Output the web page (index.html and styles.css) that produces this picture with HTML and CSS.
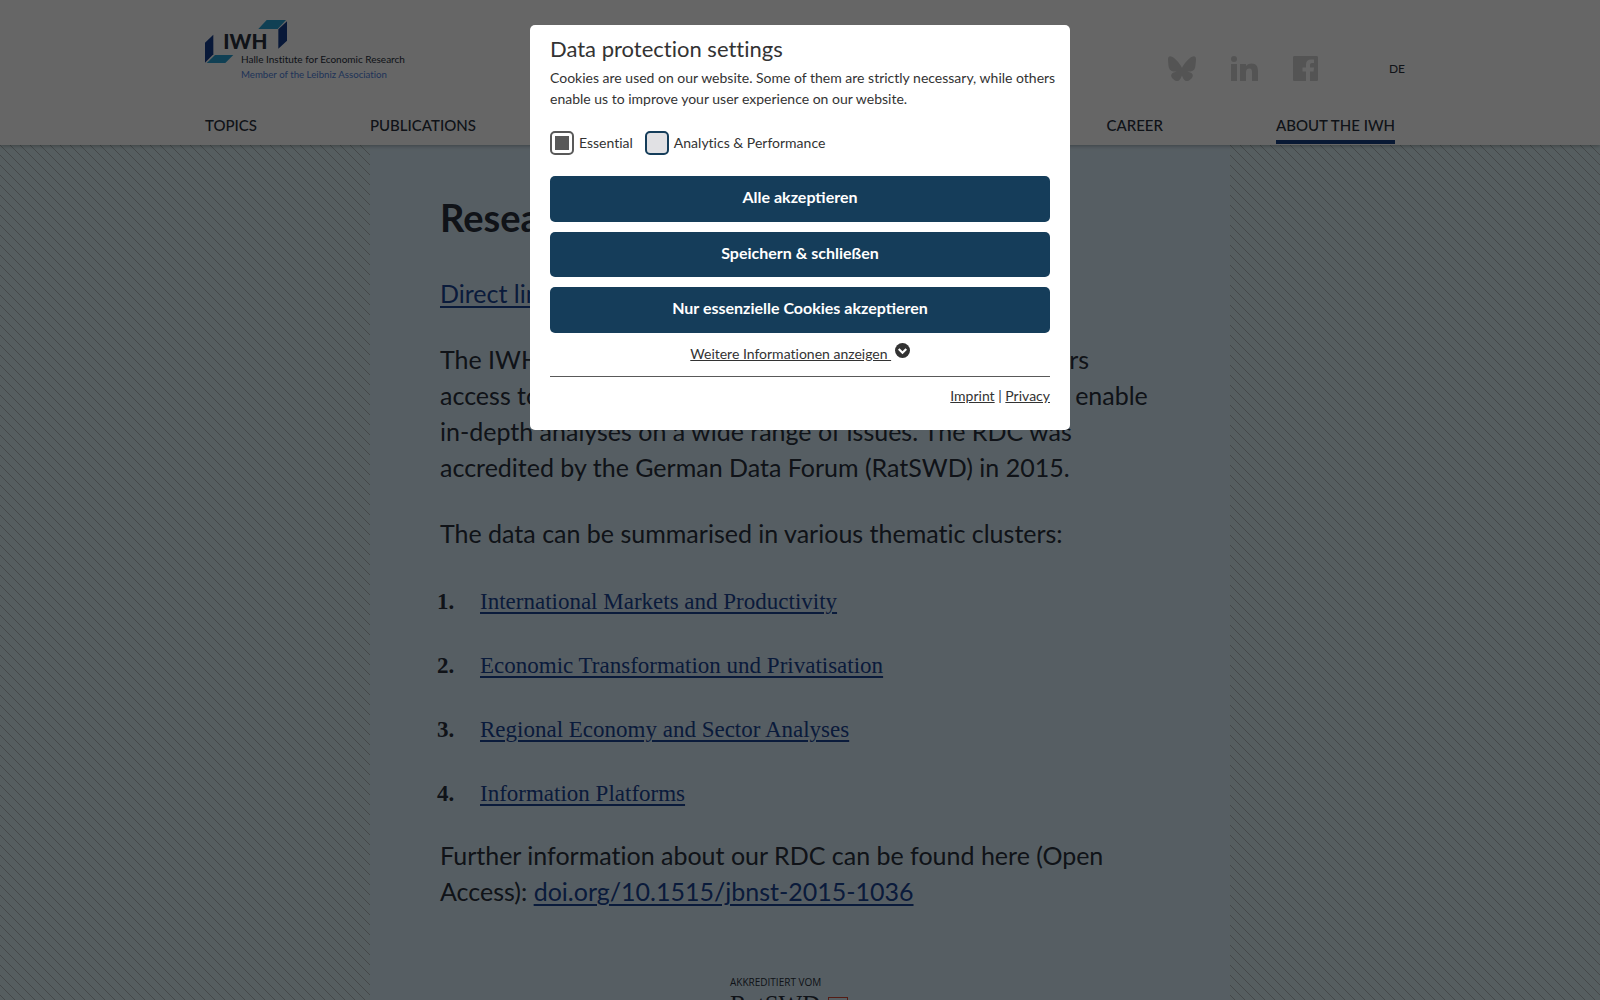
FILE: index.html
```html
<!DOCTYPE html>
<html lang="en">
<head>
    <meta charset="UTF-8">
    <meta name="viewport" content="width=device-width, initial-scale=1.0">
    <title>Research Data Centre - IWH</title>
    <link rel="stylesheet" href="styles.css">
</head>
<body>

<header class="header">
    <div class="header-top">
        <a class="logo" href="#" aria-label="IWH">
            <svg width="200" height="60" viewBox="0 0 600 180">
                <polygon class="logo-dark" points="0,68 25,44 25,103 0,128"/>
                <polygon class="logo-light" points="5,129 30,105 85,105 61,129"/>
                <polygon class="logo-light" points="160,27 185,0 243,0 218,27"/>
                <polygon class="logo-dark" points="220,28 246,4 246,62 220,86"/>
                <text class="logo-name" x="55" y="87">IWH</text>
                <text class="logo-line" x="108" y="130">Halle Institute for Economic Research</text>
                <text class="logo-member" x="108" y="174">Member of the Leibniz Association</text>
            </svg>
        </a>
        <div class="social">
            <a href="#" aria-label="Bluesky">
                <svg width="28" height="25" viewBox="0 0 28 25"><path d="M6 2c3.300 2.400 6.800 7.200 8 9.900 1.200-2.700 4.700-7.500 8-9.900 2.400-1.800 6-3.100 6 1.200 0 .9-.5 7.200-.8 8.200-1 3.600-4.700 4.500-8 4 5.700 1 7.200 4.200 4 7.400-6 6.100-8.600-1.500-9.200-3.400-.7 1.900-3.200 9.500-9.200 3.400-3.200-3.200-1.700-6.400 4-7.400-3.300.5-7-.4-8-4C.5 10.400 0 4.100 0 3.200 0-1.100 3.600.2 6 2z"/></svg>
            </a>
            <a href="#" aria-label="LinkedIn">
                <svg width="27" height="25" viewBox="0 0 27 25"><circle cx="3" cy="3" r="3"/><path d="M0 8h6v17H0zM9 8h6v2.300C16 8.500 18 7.500 20.500 7.500c5 0 6.500 3 6.500 8V25h-6v-8.500c0-2.500-.5-4-2.700-4-2.300 0-3.300 1.500-3.300 4V25H9z"/></svg>
            </a>
            <a href="#" aria-label="Facebook">
                <svg width="25" height="25" viewBox="0 0 25 25"><path d="M1.500 0h22C24.500 0 25 .5 25 1.500v22c0 1-.5 1.500-1.500 1.500H17v-9.500h3.500l.5-4h-4V9c0-1.200.5-2 2-2h2V3.700C20.500 3.500 19.500 3.500 18 3.500c-3 0-5 1.800-5 5v3H9.500v4H13V25H1.500C.5 25 0 24.500 0 23.500v-22C0 .5.500 0 1.500 0z"/></svg>
            </a>
            <a class="lang" href="#">DE</a>
        </div>
    </div>
    <nav class="nav">
        <div class="nav-group">
            <a href="#">TOPICS</a>
            <a href="#">PUBLICATIONS</a>
        </div>
        <div class="nav-group">
            <a href="#">CAREER</a>
            <a class="active" href="#">ABOUT THE IWH</a>
        </div>
    </nav>
</header>

<main class="page">
    <article class="content">
        <h1>Research Data Centre</h1>
        <p><a href="#">Direct link to the data</a></p>
        <p>The IWH Research Data Centre (RDC) offers all researchers access to extensive microdata and different data sets that enable in-depth analyses on a wide range of issues. The RDC was accredited by the German Data Forum (RatSWD) in 2015.</p>
        <p>The data can be summarised in various thematic clusters:</p>
        <ol>
            <li><a href="#">International Markets and Productivity</a></li>
            <li><a href="#">Economic Transformation und Privatisation</a></li>
            <li><a href="#">Regional Economy and Sector Analyses</a></li>
            <li><a href="#">Information Platforms</a></li>
        </ol>
        <p>Further information about our RDC can be found here (Open Access): <a href="#">doi.org/10.1515/jbnst-2015-1036</a></p>
        <div class="accredited">
            <div class="accredited-by">AKKREDITIERT VOM</div>
            <div class="accredited-name">RatSWD <span class="accredited-mark"></span></div>
        </div>
    </article>
</main>

<div class="overlay">
    <form class="modal" role="dialog" aria-labelledby="modal-title">
        <h2 id="modal-title">Data protection settings</h2>
        <p>Cookies are used on our website. Some of them are strictly necessary, while others enable us to improve your user experience on our website.</p>
        <div class="options">
            <input type="checkbox" id="essential" checked disabled>
            <label for="essential">Essential</label>
            <input type="checkbox" id="analytics">
            <label for="analytics">Analytics &amp; Performance</label>
        </div>
        <button type="button">Alle akzeptieren</button>
        <button type="button">Speichern &amp; schließen</button>
        <button type="button">Nur essenzielle Cookies akzeptieren</button>
        <div class="more">
            <a href="#">Weitere Informationen anzeigen&nbsp;</a>
            <svg width="15" height="15" viewBox="0 0 14 14"><circle cx="7" cy="7" r="7"/><path d="M3.500 5.500L7 9l3.500-3.500"/></svg>
        </div>
        <div class="legal"><a href="#">Imprint</a> | <a href="#">Privacy</a></div>
    </form>
</div>

</body>
</html>
```

FILE: styles.css
```css
* {
    box-sizing: border-box;
}
body {
    margin: 0;
    height: 100vh;
    overflow: hidden;
    font-family: Lato, sans-serif;
    font-variant-ligatures: none;
    color: #28303c;
    background-color: #d7ebf0;
    background-image: linear-gradient(45deg, transparent 46%, #acb4b6 46%, #acb4b6 54%, transparent 54%);
    background-size: 10px 10px;
    background-position: 5px 0;
}
a {
    color: #1a4494;
}

/* header */
.header {
    position: relative;
    height: 145px;
    padding: 20px 195px 0 205px;
    background-color: #fff;
    box-shadow: 0 1px 4px rgba(0, 0, 0, 0.3);
}
.header-top {
    display: flex;
    justify-content: space-between;
    height: 92px;
}
.logo-dark {
    fill: #143c8c;
}
.logo-light {
    fill: #28a0d2;
}
.logo-name {
    font-size: 62px;
    font-weight: 900;
    fill: #28303c;
}
.logo-line {
    font-size: 30px;
    fill: #28303c;
}
.logo-member {
    font-size: 29px;
    fill: #5082dc;
}
.social {
    display: flex;
    align-items: center;
    gap: 35px;
    height: 96px;
}
.social svg {
    display: block;
    fill: #d2d2d2;
}
.lang {
    margin-left: 36px;
    font-size: 12px;
    color: #28303c;
    text-decoration: none;
}
.nav,
.nav-group {
    display: flex;
    justify-content: space-between;
}
.nav {
    padding-right: 10px;
}
.nav-group {
    gap: 113px;
}
.nav a {
    height: 32px;
    font-size: 15px;
    font-weight: 500;
    line-height: 27px;
    color: #28303c;
    text-decoration: none;
}
.nav .active {
    border-bottom: 4px solid #153d80;
}

/* content */
.page {
    display: flex;
    justify-content: center;
}
.content {
    width: 860px;
    padding: 47px 70px;
    background-color: #d7ebf7;
    font-size: 25px;
    line-height: 36px;
}
.content h1 {
    margin: 0 0 33px;
    font-size: 38px;
    line-height: 50px;
}
.content p {
    margin: 0 0 30px;
}
.content a {
    text-decoration-thickness: 2px;
    text-underline-offset: 3px;
}
.content ol {
    margin: 33px 0 25px;
    padding-left: 20px;
    font-family: "Liberation Serif", serif;
    font-size: 23px;
}
.content li {
    padding-left: 20px;
}
.content li + li {
    margin-top: 28px;
}
.content li::marker {
    font-weight: bold;
}
.accredited {
    width: 140px;
    margin: 66px auto 0;
}
.accredited-by {
    font-family: "Open Sans", sans-serif;
    font-size: 10px;
    line-height: 14px;
}
.accredited-name {
    display: flex;
    gap: 8px;
    font-family: "Liberation Serif", serif;
    font-size: 25px;
    line-height: 32px;
}
.accredited-mark {
    width: 20px;
    height: 20px;
    margin-top: 8px;
    border: 1px solid #d24632;
}

/* cookie dialog */
.overlay {
    position: fixed;
    inset: 0;
    padding-top: 25px;
    background-color: rgba(0, 0, 0, 0.6);
}
.modal {
    width: 540px;
    margin: 0 auto;
    padding: 9px 20px 24px;
    border-radius: 5px;
    background-color: #fff;
    color: #333;
    font-size: 14px;
    line-height: 21px;
}
.modal h2 {
    margin: 0 0 3px;
    font-size: 22px;
    font-weight: 400;
    line-height: 30px;
}
.modal p {
    margin: 0 -10px 22px 0;
}
.options {
    display: flex;
    align-items: center;
    margin-bottom: 21px;
}
.options input {
    appearance: none;
    width: 24px;
    height: 24px;
    margin: 0 5px 0 0;
    border: 2px solid #153d5a;
    border-radius: 5px;
    background-color: #e1e1e4;
}
.options input:checked {
    padding: 3px;
    border-color: #595959;
    background-color: #595959;
    background-clip: content-box;
}
.options label {
    margin-right: 12px;
    padding-bottom: 2px;
}
.modal button {
    display: block;
    width: 100%;
    height: 46px;
    margin-bottom: 10px;
    padding: 0 0 5px;
    border: 0;
    border-radius: 5px;
    background-color: #153d5a;
    color: #fff;
    font-family: inherit;
    font-size: 16px;
    font-weight: 700;
}
.modal button:nth-of-type(2) {
    height: 45px;
}
.modal a {
    color: #333;
}
.more {
    padding-bottom: 12px;
    border-bottom: 1px solid #595959;
    line-height: 20px;
    text-align: center;
}
.more svg {
    vertical-align: 1px;
    fill: #333;
}
.more path {
    fill: none;
    stroke: #fff;
    stroke-width: 2;
}
.legal {
    padding-top: 8px;
    text-align: right;
}
```
